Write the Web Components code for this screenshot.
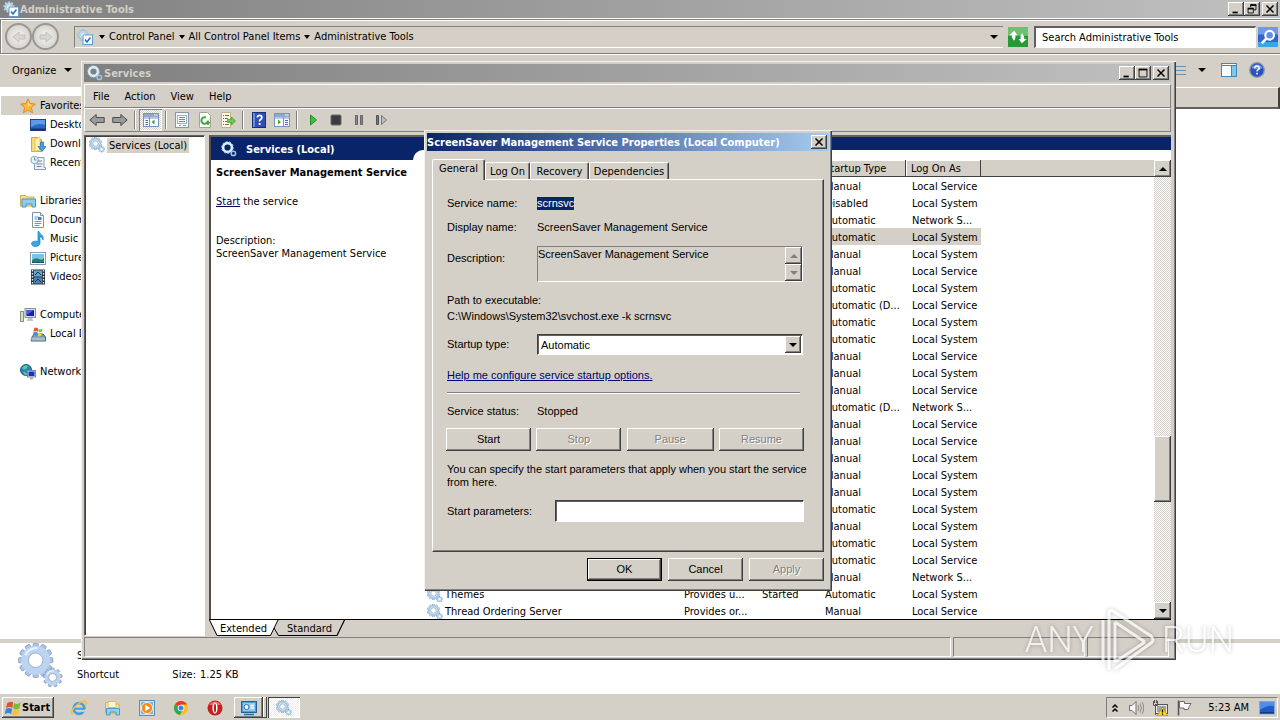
<!DOCTYPE html>
<html lang="en">
<head>
<meta charset="utf-8">
<title>Desktop</title>
<style>
:root{
  --face:#d4d0c8; --shade:#808080; --dark:#404040; --light:#fff; --navy:#0a246a;
  --ui:"DejaVu Sans Condensed","Noto Sans",sans-serif;
  --dlg:"Liberation Sans",Arial,sans-serif;
}
html,body{height:100%}
body{margin:0;background:#fff;color:#000;font:11px/13px var(--ui);display:flex;flex-direction:column;min-height:100vh;overflow:hidden}
main{position:relative;flex:1;display:flex;min-height:0}
explorer-window{flex:1}
services-window{position:absolute;left:81px;right:104px;top:61px}
properties-dialog{position:absolute;left:424px;top:130px}
any-mark{position:absolute;right:46px;top:608px}
</style>
</head>
<body>
<main>
  <explorer-window></explorer-window>
  <services-window></services-window>
  <properties-dialog></properties-dialog>
  <any-mark></any-mark>
</main>
<task-bar></task-bar>

<script>
const BASE = `
*,:host{box-sizing:border-box}
:host{display:block}
button,input,select,textarea{font:inherit;color:inherit;margin:0;padding:0;border:0;border-radius:0;background:none;outline:0}
a{color:inherit;text-decoration:none}
.raised{background:var(--face);box-shadow:inset -1px -1px var(--dark),inset 1px 1px var(--light),inset -2px -2px var(--shade)}
`;
function define(name, css, html, setup){
  const t = document.createElement('template');
  t.innerHTML = `<style>${BASE}${css}</style>${html}`;
  customElements.define(name, class extends HTMLElement{
    constructor(){ super(); this.attachShadow({mode:'open'}); }
    connectedCallback(){
      if(this.shadowRoot.childNodes.length) return;
      this.shadowRoot.append(t.content.cloneNode(true));
      if(setup) setup(this, this.shadowRoot);
    }
  });
}

/* ---------- icons ---------- */
const gear = (cx,cy,r,fill,stroke,n=8,hole='#fff') => {
  let teeth='';
  for(let i=0;i<n;i++) teeth += `<rect x="${cx-r*.17}" y="${cy-r}" width="${r*.34}" height="${r*.5}" fill="${fill}" stroke="${stroke}" stroke-width="${r*.07}" transform="rotate(${i*360/n} ${cx} ${cy})"/>`;
  return teeth + `<circle cx="${cx}" cy="${cy}" r="${r*.74}" fill="${fill}" stroke="${stroke}" stroke-width="${r*.09}"/><circle cx="${cx}" cy="${cy}" r="${r*.42}" fill="${hole}" stroke="${stroke}" stroke-width="${r*.09}"/>`;
};
const softGear = (cx,cy,r,n) => {
  let teeth='';
  for(let i=0;i<n;i++) teeth += `<rect x="${cx-r*.15}" y="${cy-r}" width="${r*.3}" height="${r*.4}" rx="${r*.06}" fill="#a9c4e6" stroke="#8399b8" stroke-width=".25" transform="rotate(${i*360/n} ${cx} ${cy})"/>`;
  return teeth + `<circle cx="${cx}" cy="${cy}" r="${r*.62}" fill="#fff" stroke="#bcd4f1" stroke-width="${r*.44}"/><circle cx="${cx}" cy="${cy}" r="${r*.42}" fill="#fff" stroke="#8fa6c6" stroke-width=".3"/><path d="M${cx-r*.6} ${cy-r*.3}a${r*.7} ${r*.7} 0 0 1 ${r*.7} ${-r*.4}" fill="none" stroke="#eaf4ff" stroke-width="${r*.14}"/>`;
};
const ICONS = {
  gears: gear(6.5,6.5,6.3,'#cfe3f2','#6f9cbd',10)+gear(12.6,12.4,3.3,'#cfe3f2','#6f9cbd',8),
  gearlens: `<circle cx="6.5" cy="6.5" r="4.4" fill="none" stroke="#d8ecfa" stroke-width="2.6"/><circle cx="6.5" cy="6.5" r="5.9" fill="none" stroke="#9cc4e4" stroke-width="1" stroke-dasharray="2 1.6"/><circle cx="12.4" cy="12.4" r="2.2" fill="none" stroke="#9cc4e4" stroke-width="1.5"/>`,
  tools: gear(6,6,5.6,'#cfe3f2','#7aa5c4',9)+`<rect x="6" y="6" width="9.5" height="9.5" fill="#fff" stroke="#5f9ccc"/><path d="M8 10.5l2 2.4 3.4-4.4" fill="none" stroke="#2d6fb5" stroke-width="1.6"/>`,
  biggears: softGear(6.5,6,6,12)+softGear(12.4,12,3.3,9),
  star:`<path d="M8 .8l2.1 4.8 5.2.5-3.9 3.5 1.2 5.2L8 12.1l-4.6 2.7 1.2-5.2L.7 6.1l5.2-.5z" fill="#fbb83a" stroke="#e08a1c"/><path d="M8 3l1.2 3.6 3 .4L8 8z" fill="#ffe49a"/>`,
  desktop:`<rect x=".5" y="2.5" width="15" height="11" fill="#2d67c4" stroke="#1c4587"/><path d="M1 3h14v5Q8 5 1 10z" fill="#5b9be8"/><rect x="1" y="11.5" width="14" height="2" fill="#17325f"/>`,
  download:`<path d="M1.500 1.500h6l1 2h3v12h-10z" fill="#f5dc7c" stroke="#cfa94a"/><path d="M5 3l5-2v13l-5 1.500z" fill="#fff0ae" stroke="#d9b85a" stroke-width=".7"/><path d="M10.500 6h3v4.500H16L12 15.500 8 10.500h2.500z" fill="#3fa0e6" stroke="#1c6fb5" stroke-width=".7"/>`,
  recent:`<path d="M5 2.500h9v10h1.500v2h-11V4" fill="#eef3f7" stroke="#8c9dad"/><circle cx="4.500" cy="5" r="3.700" fill="#e9f3fb" stroke="#8aa5bb"/><path d="M4.500 2.500V5H6.500M8 6h4M6.500 9h6M6.500 11.500h5" stroke="#7189a0" fill="none"/>`,
  libs:`<path d="M.5 2.500h5l1 1.500H14v9H.5z" fill="#f6e08c" stroke="#cfae4e"/><path d="M2 6h13.500v8h-3.500v-3H6v3H2z" fill="#8fcdf0" stroke="#4a94c4"/>`,
  doc:`<path d="M2.500.5h8l3 3v12h-11z" fill="#fff" stroke="#8594a5"/><path d="M10.500.5v3h3" fill="#dce5ee" stroke="#8594a5"/><path d="M4.500 5h4M4.500 7h3M4.500 9.500h7M4.500 11.500h7M4.500 13.500h5" stroke="#5f9bd1"/><rect x="8" y="5" width="3.500" height="3" fill="#3f7fc4"/>`,
  music:`<path d="M9 .5c.5 3 5.500 3.500 4 8.500-.5-2.500-2-3-3-3.500V12c0 2-2 3.500-4.500 3.500S1.500 14 1.500 12.500 4 9.500 8 10.500V.5z" fill="#38a6e8" stroke="#1c78b8" stroke-width=".7"/>`,
  picture:`<rect x=".5" y="2.500" width="15" height="12" fill="#fff" stroke="#8a9bab"/><rect x="2" y="4" width="12" height="9" fill="#7cc3ec"/><path d="M2 10q4-3 7-1t5-1v5H2z" fill="#23806a"/><rect x="2" y="12" width="12" height="1" fill="#12577d"/>`,
  video:`<rect x="1" y=".5" width="14" height="15" fill="#30343a"/><path d="M2.500 1v14M13.500 1v14" stroke="#e8eef4" stroke-width="1.300" stroke-dasharray="1.500 1.500"/><rect x="4" y="1.500" width="8" height="6" fill="#5ea5d8"/><rect x="4" y="8.500" width="8" height="6" fill="#4585ba"/><path d="M5 6l3-3 3 3M5 13l3-3 3 3" stroke="#23313f" fill="none"/>`,
  computer:`<rect x="5" y="1.500" width="10.500" height="9" fill="#d9dee6" stroke="#8c94a3"/><rect x="6.500" y="3" width="7.500" height="6" fill="#1a23b0"/><path d="M6.500 3h7.500l-7.500 5z" fill="#4a63e2"/><path d="M8 11h4l1.500 3h-7z" fill="#c2c7d0"/><rect x=".5" y="4.500" width="3" height="10" fill="#cfe5b8" stroke="#839a73"/>`,
  disk:`<path d="M2 11l2-3h9l2.500 3v4H1z" fill="#7d98a8" stroke="#4a6271"/><rect x="1.500" y="11.500" width="13.500" height="3" fill="#9fc0cf"/><path d="M4 2.500q2-2 4 0v3.200q-2-1.500-4.500.3z" fill="#e8582c"/><path d="M8.500 2.800q2 1.500 4-.3l-.5 3q-2 1.500-3.500.2z" fill="#7cc144"/><path d="M3.500 6.500q2-1.500 4.200 0l-.5 3q-2-1.200-4.200 0z" fill="#3c8fe0"/><path d="M8.200 6.800q2 1.200 3.500 0l-.4 3q-2 1.200-3.500 0z" fill="#fbc93a"/>`,
  network:`<circle cx="6" cy="6" r="5.500" fill="#2a86b8" stroke="#1b5a87"/><path d="M2 4q3-4 6-2L6 5 4 5.500zM3 8l3 .5L7 11l-2 .5z" fill="#5ccf86"/><rect x="7.500" y="6.500" width="8" height="6.500" fill="#dfe6ef" stroke="#7b89a0"/><rect x="8.500" y="7.500" width="6" height="4.500" fill="#1c2fc4"/><path d="M10 13.500h3v2h-3z" fill="#aab"/>`,
  back:`<path d="M.8 8l6.400-5.500v3h8v5h-8v3z" fill="#9a9a9a" stroke="#4e4e4e"/>`,
  fwd:`<path d="M15.200 8L8.800 2.500v3h-8v5h8v3z" fill="#9a9a9a" stroke="#4e4e4e"/>`,
  console:`<rect x=".5" y="1.500" width="15" height="13" fill="#fff" stroke="#7b93b8"/><rect x="1" y="2" width="14" height="3" fill="#8fa9d2"/><path d="M11 3h1.500M13 3h1.500" stroke="#fff"/><path d="M6.500 5v9.500M1 6h14" stroke="#7b93b8"/><path d="M2.500 8.500h2.500M2.500 10.500h2.500M2.500 12.500h2.500" stroke="#4a6fa8"/><path d="M11.500 7.500v5L8.500 10z" fill="#49a62c"/>`,
  panel:`<rect x=".5" y="1.500" width="15" height="13" fill="#fff" stroke="#7b93b8"/><rect x="1" y="2" width="14" height="3" fill="#8fa9d2"/><path d="M11 3h1.500M13 3h1.500" stroke="#fff"/><path d="M9.500 5v9.500M1 6h14" stroke="#7b93b8"/><path d="M11 8.500h3M11 10.500h3M11 12.500h3" stroke="#4a6fa8"/><path d="M4 7.500v5L7 10z" fill="#49a62c"/>`,
  props:`<path d="M.5 2.500h15" stroke="#a7b3c4"/><rect x="1.500" y=".5" width="13" height="15" fill="#f6f8fb" stroke="#8797b0"/><rect x="3.500" y="3.500" width="9" height="8" fill="#fff" stroke="#9fb0c9"/><path d="M5 5.500h6M5 7.500h6M5 9.500h6" stroke="#6f87ad"/><path d="M5 13.500h2M9 13.500h3" stroke="#8797b0"/>`,
  refresh:`<path d="M2.500.5h8l3 3v12h-11z" fill="#fff" stroke="#a5a58c"/><path d="M11 8.500a3.300 3.300 0 1 1-2-3" fill="none" stroke="#3da53a" stroke-width="2"/><path d="M8.500 10h5l-2.500 3.500z" fill="#3da53a"/>`,
  exportl:`<path d="M1.500.5h9v15h-9z" fill="#fffbe6" stroke="#bdb286"/><path d="M3 3.500h1M5 3.500h4M3 6.500h1M5 6.500h3M3 9.500h1M5 9.500h2M3 12.500h1M5 12.500h4" stroke="#766f4c"/><path d="M7.500 7.500h4v-2.500l4 4-4 4v-2.500h-4z" fill="#6dcb4a" stroke="#3a9a22" stroke-width=".7"/>`,
  help:`<rect x="1.500" y=".5" width="13" height="15" fill="#2f4fb5" stroke="#1b2f7c"/><rect x="2" y="1" width="2" height="14" fill="#6d8be0"/><path d="M6.300 5.500q.2-2.200 2.300-2.200t2.300 2q0 1.400-1.300 2.200t-1 2" fill="none" stroke="#fff" stroke-width="1.700"/><rect x="7.700" y="11" width="1.900" height="1.900" fill="#fff"/>`,
  play:`<path d="M5.500 3v10l6-5z" fill="#3fc13a" stroke="#1c8f1c"/>`,
  stop:`<rect x="3" y="3" width="10" height="10" rx="1" fill="#3c3c3c" stroke="#6b6b6b"/>`,
  pause:`<path d="M4.500 3.500h2v9h-2zM9.500 3.500h2v9h-2z" fill="#888" stroke="#666"/>`,
  step:`<path d="M2.500 3.500h2v9h-2z" fill="#777" stroke="#555"/><path d="M7.500 3.500v9l5-4.500z" fill="#bbb" stroke="#777"/>`,
  views:`<path d="M0 4.500h3M5 4.500h11M0 8.500h3M5 8.500h11M0 12.500h3M5 12.500h11" stroke="#6b8fae"/>`,
  preview:`<rect x=".5" y="1.500" width="15" height="13" fill="#fff" stroke="#4585b5"/><path d="M.5 3.500h15" stroke="#4585b5"/><rect x="10.500" y="4" width="4.500" height="10" fill="#7ec8ee"/><path d="M10.500 4v10" stroke="#4585b5"/>`,
  helpc:`<circle cx="8" cy="8" r="7.300" fill="#2a52b8" stroke="#8c97b0" stroke-width="1.300"/><path d="M2.500 6a6 6 0 0 1 11 0q-5 3-11 0z" fill="#6f93e2"/><path d="M5.800 6.200q.1-2.200 2.200-2.200t2.200 1.900q0 1.300-1.200 2t-.9 1.600" fill="none" stroke="#fff" stroke-width="1.500"/><rect x="7.200" y="10.800" width="1.700" height="1.600" fill="#fff"/>`,
  go:`<rect x="0" y="0" width="16" height="16" fill="#259b38"/><path d="M0 0h16v7H0z" fill="#6cc274"/><path d="M1 6.500L5 3l2.500 3.500H5.800Q6.500 9 4.800 11 2.800 9 3 6.500zM15 9.500L11 13 8.500 9.500h1.700Q9.500 7 11.200 5q2 2 1.800 4.500z" fill="#fff"/>`,
  search:`<rect width="16" height="16" fill="#2f63cf"/><path d="M0 0h16v6H0z" fill="#6d9be8"/><path d="M0 12h16v4H0z" fill="#3aa5e8"/><circle cx="9.300" cy="6.600" r="3.500" fill="#5f90e6" stroke="#fff" stroke-width="1.700"/><path d="M6.800 9.200L3 13" stroke="#fff" stroke-width="2"/>`,
  win:`<path d="M2 3.500Q5 .5 8.200 2.600L7.300 8Q4.500 6 1 8.300z" fill="#e8502a"/><path d="M9 3q3 2 6.500-.5l-1 5.700q-3.300 2.300-6.300.2z" fill="#74bd3d"/><path d="M.8 9Q4 6.900 7.100 8.800l-1 5.400Q3.500 12-.1 14.200z" fill="#3a84d8"/><path d="M8 9.300q3 2 6.300-.1l-1 5.300Q10 16.500 7 14.600z" fill="#fbc334"/>`,
  ie:`<circle cx="8" cy="8.500" r="5.300" fill="none" stroke="#3f9fe2" stroke-width="2.700"/><path d="M4 8.700h9.500" stroke="#3f9fe2" stroke-width="2"/><path d="M11 11l4-.5v-1.500" stroke="var(--face)" stroke-width="2" fill="none"/><path d="M1.500 14.500Q-1 11 6 5t9-3.500q1 1-.8 4" fill="none" stroke="#f0bf3a" stroke-width="1.500"/>`,
  folder:`<path d="M.5 2.500h5l1 1.500H14v9H.5z" fill="#f9e596" stroke="#d0ae50"/><path d="M3 1.500h8v6H3z" fill="#fff6cf" stroke="#d9bd68"/><path d="M1.500 8.500h13v6.500h-3.500v-3H5v3H1.500z" fill="#8fd0ee" stroke="#4d9ac6"/>`,
  wmp:`<rect x=".5" y=".5" width="15" height="15" fill="#cfe4f4" stroke="#5b8db5"/><rect x="2" y="2" width="12" height="12" fill="#7fb2d8"/><circle cx="8" cy="8" r="5.600" fill="#f48a1a" stroke="#fff" stroke-width=".8"/><path d="M6.200 4.800v6.400L11.300 8z" fill="#fff"/>`,
  chrome:`<circle cx="8" cy="8" r="7" fill="#fbc116"/><path d="M8 8L1.900 4.500A7 7 0 0 1 14.100 4.500H8z" fill="#e33b2e"/><path d="M8 8L1.900 4.500A7 7 0 0 0 7 14.900L10 9z" fill="#2da94f"/><circle cx="8" cy="8" r="3.300" fill="#fff"/><circle cx="8" cy="8" r="2.500" fill="#3e7ff0"/>`,
  opera:`<circle cx="8" cy="8" r="7.500" fill="#c81e1e"/><path d="M2 5a7 7 0 0 1 12 0z" fill="#e86a62"/><ellipse cx="8" cy="8" rx="2.600" ry="5.500" fill="#fff"/><ellipse cx="8" cy="8" rx="1" ry="4.600" fill="#b01818"/>`,
  cpl:`<rect x=".5" y="1.500" width="15" height="11" fill="#4ea0dc" stroke="#285f96"/><rect x="2" y="3" width="12" height="8" fill="#8fcaf2"/><circle cx="5.500" cy="7" r="2.500" fill="#fff" stroke="#2b6ba5"/><path d="M9.500 5.500h3.500M9.500 8h3.500" stroke="#fff" stroke-width="1.300"/><path d="M3 14.500h10" stroke="#2b6ba5" stroke-width="1.500"/>`,
  chev:`<path d="M5.500 7.500L8 5l2.500 2.500M5.500 11.500L8 9l2.500 2.500" fill="none" stroke="#000" stroke-width="1.500"/>`,
  sound:`<path d="M1.500 5.500h2.500L8 1.500v13l-4-4H1.500z" fill="#f5f5f5" stroke="#707070"/><path d="M10 5q1.800 3 0 6M12 3.500q3 4.500 0 9M14 2q3.500 6 0 12" fill="none" stroke="#8a8a8a"/>`,
  net:`<rect x="3.500" y="4.500" width="12" height="9" fill="#e8e8e8" stroke="#555"/><rect x="5" y="6" width="9" height="6" fill="#9aa3ad"/><path d="M1.500 1v4.500h4V1M3.500 5.500V15M2.500 0v3M4.500 0v3" stroke="#555" fill="none"/><path d="M10.500 7L15.800 15.800H5.200z" fill="#ffd91c" stroke="#a58700" stroke-width=".7"/><path d="M10.500 9.500v3M10.500 13.500v1.300" stroke="#000" stroke-width="1.300"/>`,
  flag:`<path d="M2.500.5v15" stroke="#555" stroke-width="1.500"/><path d="M3.500 1.500h5v2h6.500q-2 3-3 6H8v-1.500H3.500z" fill="#f8f8f8" stroke="#6b6b6b"/>`,
  showdesk:`<rect x=".5" y="1.500" width="15" height="12.500" fill="#1f5cc2" stroke="#86a7d6"/><path d="M1 2h14v4Q8 5 1 10z" fill="#4c8ee8"/><rect x="1" y="12" width="14" height="1.500" fill="#123a7c"/>`,
  min:`<path d="M4 12h6" stroke="#000" stroke-width="2"/>`,
  max:`<path d="M3.500 4v8.500h9V4" fill="none" stroke="#000"/><path d="M3 4h10" stroke="#000" stroke-width="2"/>`,
  restore:`<path d="M6.500 6V3.500h6V9H10" fill="none" stroke="#000"/><path d="M6 3.500h7" stroke="#000" stroke-width="2"/><path d="M3.500 7.500v5h6v-5" fill="none" stroke="#000"/><path d="M3 7.500h7" stroke="#000" stroke-width="2"/>`,
  close:`<path d="M4 4l8 8M12 4l-8 8" stroke="#000" stroke-width="1.700"/>`,
  up:`<path d="M4 10h8L8 6z"/>`,
  down:`<path d="M4 6h8l-4 4z"/>`
};
define('x-icon', `:host{display:block;flex:none;width:16px;height:16px}svg{display:block;width:100%;height:100%}`, ``, (el,root)=>{
  const s = document.createElement('div');
  s.innerHTML = `<svg viewBox="0 0 16 16" aria-hidden="true">${ICONS[el.getAttribute('name')]||''}</svg>`;
  root.append(s.firstChild);
});

/* ---------- window title bar ---------- */
define('title-bar', `
:host{display:flex;align-items:center;height:18px;padding:0 2px 0 3px;gap:1px;color:var(--face);font-weight:bold;background:linear-gradient(90deg,#808080,#c0c0c0)}
:host([active]){color:#fff;background:linear-gradient(90deg,#0a246a,#a6caf0);padding-left:0}
h1{font:inherit;margin:0;flex:1;white-space:nowrap}
.btns{display:flex}
button{width:16px;height:14px;display:grid;place-items:center}
button:not(:first-child):last-child{margin-left:2px}
button x-icon{width:14px;height:14px}
`, `<slot name="icon"></slot><h1><slot></slot></h1><div class="btns"></div>`, (el,root)=>{
  root.querySelector('.btns').innerHTML = el.getAttribute('buttons').split(' ').map(b=>`<button class="raised" aria-label="${b}"><x-icon name="${b}"></x-icon></button>`).join('');
});

/* ---------- scroll bar ---------- */
define('scroll-bar', `
:host{display:flex;flex-direction:column;width:17px;background:repeating-conic-gradient(#fff 0 25%,var(--face) 0 50%) 0 0/2px 2px}
button{height:17px;display:grid;place-items:center;flex:none}
.a{flex:258}.t{height:66px;flex:none}.b{flex:100}
:host([disabled]) .t{display:none}
:host([disabled]) x-icon{fill:#808080}
`, `<button class="raised" aria-label="Scroll up"><x-icon name="up"></x-icon></button><div class="a"></div><div class="t raised"></div><div class="b"></div><button class="raised" aria-label="Scroll down"><x-icon name="down"></x-icon></button>`);

/* ---------- explorer ---------- */
define('nav-item', `
a{display:flex;align-items:center;height:19px;gap:4px;padding-left:19px;white-space:nowrap}
:host([child]) a{padding-left:29px}
:host([selected]) a{background:var(--face)}
:host([lead]){margin-top:19px}
`, `<a href="#"><slot></slot></a>`, (el,root)=>{
  const icon = document.createElement('x-icon');
  icon.setAttribute('name', el.getAttribute('icon'));
  root.querySelector('a').prepend(icon);
});

define('explorer-window', `
:host{display:flex;flex-direction:column;background:#fff}
.address{display:flex;align-items:center;gap:5px;height:35px;padding:0 2px 0 4px;background:var(--face);border:1px solid #808080;border-right:0;box-shadow:inset 1px 1px #fff;margin-top:1px}
.round{width:27px;height:27px;border-radius:50%;border:2px solid #8a8a88;background:radial-gradient(#fff,#c9c6c0);display:grid;place-items:center;opacity:.8}
.round+.round{margin-left:-5px}
.round svg{width:14px;height:14px}
.crumbs{display:flex;align-items:center;flex:1;height:22px;margin-left:10px;padding-left:2px;border:1px solid #808080;border-right:0;border-bottom-color:#fff}
.crumbs i,.caret{width:0;border:solid transparent;border-width:4px 3px 0;border-top-color:#000}
.crumbs i{margin:0 4px}
.crumbs i:first-of-type{margin-left:6px}
.crumbs .last{margin:0 5px 0 auto;border-width:4px 4px 0}
.go{width:20px;height:20px;margin-right:1px}
.go x-icon{width:100%;height:100%}
input{width:222px;height:22px;background:#fff;border:2px solid #606060;border-right:1px solid #fff;border-bottom:1px solid #fff;padding:0 6px}
input::placeholder{color:#000;opacity:1}
.s{margin:0 0 0 -3px}
.tools{display:flex;align-items:center;height:33px;background:var(--face);border-top:1px solid #fff;padding:0 15px 2px 12px}
.tools .org{display:flex;align-items:center;gap:8px}
.caret{border-width:4px 4px 0}
.tools .sp{flex:1}
.tools .caret.v{margin:0 15px 0 12px}
.tools x-icon+x-icon{margin-left:12px}
.body{display:flex;flex:1;align-items:flex-start}
nav{flex:1;padding-top:9px;margin-left:1px}
.head{width:105px;height:22px;background:var(--face);border:solid;border-width:1px 2px 2px 0;border-color:#fff #404040 #606060 #fff}
.details{display:flex;height:54px;border-top:4px solid var(--face);background:#fff;padding-left:17px;gap:14px}
.details>x-icon{width:46px;height:46px}
.first,dl{display:grid;row-gap:6px;padding-top:6px;align-content:start;white-space:nowrap}
.first{width:43px}
dl{margin:0;grid-template-columns:62px 130px 69px auto;column-gap:4px}
dd{margin:0}dt{justify-self:end}
`, `
<title-bar buttons="min restore close"><x-icon slot="icon" name="tools"></x-icon>Administrative Tools</title-bar>
<div class="address">
  <button class="round" aria-label="Back"><svg viewBox="0 0 14 14"><path d="M1 7l6-5v3h6v4H7v3z" fill="#ddd9d2" stroke="#bbb"/></svg></button>
  <button class="round" aria-label="Forward"><svg viewBox="0 0 14 14"><path d="M13 7L7 2v3H1v4h6v3z" fill="#ddd9d2" stroke="#bbb"/></svg></button>
  <div class="crumbs"><x-icon name="tools"></x-icon><i></i><a href="#">Control Panel</a><i></i><a href="#">All Control Panel Items</a><i></i><a href="#">Administrative Tools</a><i class="last"></i></div>
  <button class="go" aria-label="Refresh"><x-icon name="go"></x-icon></button>
  <input type="text" aria-label="Search" placeholder="Search Administrative Tools">
  <button class="go s" aria-label="Search"><x-icon name="search"></x-icon></button>
</div>
<div class="tools"><button class="org">Organize<span class="caret"></span></button><span class="sp"></span><x-icon name="views"></x-icon><span class="caret v"></span><x-icon name="preview"></x-icon><x-icon name="helpc"></x-icon></div>
<div class="body">
  <nav>
    <nav-item icon="star" selected>Favorites</nav-item>
    <nav-item icon="desktop" child>Desktop</nav-item>
    <nav-item icon="download" child>Downloads</nav-item>
    <nav-item icon="recent" child>Recent Places</nav-item>
    <nav-item icon="libs" lead>Libraries</nav-item>
    <nav-item icon="doc" child>Documents</nav-item>
    <nav-item icon="music" child>Music</nav-item>
    <nav-item icon="picture" child>Pictures</nav-item>
    <nav-item icon="video" child>Videos</nav-item>
    <nav-item icon="computer" lead>Computer</nav-item>
    <nav-item icon="disk" child>Local Disk (C:)</nav-item>
    <nav-item icon="network" lead>Network</nav-item>
  </nav>
  <div class="head"></div>
</div>
<div class="details">
  <x-icon name="biggears"></x-icon>
  <div class="first"><span>Services</span><span>Shortcut</span></div>
  <dl><dt>Date modified:</dt><dd>7/14/2009</dd><dt>Date created:</dt><dd>7/14/2009</dd><dt>Size:</dt><dd>1.25 KB</dd></dl>
</div>`);

/* ---------- services console ---------- */
const ROWS = [
 'Manual|Local Service','Disabled|Local System','Automatic|Network S...','Automatic|Local System','Manual|Local System','Manual|Local Service',
 'Automatic|Local System','Automatic (D...|Local Service','Automatic|Local System','Automatic|Local System','Manual|Local Service','Manual|Local System','Manual|Local Service',
 'Automatic (D...|Network S...','Manual|Local Service','Manual|Local Service','Manual|Local System','Manual|Local System','Manual|Local System','Automatic|Local System',
 'Manual|Local System','Automatic|Local System','Automatic|Local Service','Manual|Network S...',
 'Automatic|Local System|Themes|Provides u...|Started','Manual|Local Service|Thread Ordering Server|Provides or...|'
].map(r=>r.split('|'));

define('service-table', `
:host{display:flex;flex:1;min-width:0;align-items:stretch}
.wrap{flex:1;min-width:0;background:linear-gradient(var(--face),var(--face)) 0 0/100% 16px no-repeat,linear-gradient(#404040,#404040) 0 16px/100% 1px no-repeat}
table{border-collapse:separate;border-spacing:0;table-layout:fixed;width:557px}
th{height:17px;padding:1px 5px 0;text-align:left;font-weight:normal;background:var(--face);border-bottom:1px solid #404040;border-right:1px solid #404040;box-shadow:inset 1px 1px #fff}
td{height:17px;padding:2px 0 0 6px;white-space:nowrap;overflow:hidden}
td:first-child{padding:0 0 0 3px}
.n{display:flex;align-items:center;gap:2px;height:17px;padding-top:2px}
tr.sel td{background:var(--face)}
`, `<div class="wrap"><table><colgroup><col style="width:254px"><col style="width:78px"><col style="width:63px"><col style="width:87px"><col style="width:75px"></colgroup>
<thead><tr><th></th><th></th><th></th><th>Startup Type</th><th>Log On As</th></tr></thead><tbody></tbody></table></div><scroll-bar></scroll-bar>`, (el,root)=>{
  root.querySelector('tbody').innerHTML = ROWS.map(([type,as,name='',desc='',st=''],i)=>
   `<tr${i===3?' class="sel"':''}><td><div class="n">${name?`<x-icon name="gears"></x-icon>${name}`:''}</div></td><td>${desc}</td><td>${st}</td><td>${type}</td><td>${as}</td></tr>`).join('');
});

define('view-tabs', `
:host{display:flex;height:17px;background:var(--face);margin-left:-2px;border-top:1px solid #000}
svg{display:block;height:16px;flex:none}
button{height:16px;padding:1px 2px 0;border-bottom:1px solid #000}
.e{background:#fff}
`, `
<svg width="9" viewBox="0 0 9 16"><path d="M1 0h8v16L9 15.500z" fill="#fff"/><path d="M.5 0L8 15.500H9" fill="none" stroke="#000"/></svg>
<button class="e">Extended</button>
<svg width="16" viewBox="0 0 16 16"><path d="M0 0h9L1 16H0z" fill="#fff"/><path d="M0 15.500h1.500L9 0M5 8l4.500 7.500H16" fill="none" stroke="#000"/></svg>
<button>Standard</button>
<svg width="12" viewBox="0 0 12 16"><path d="M0 15.500h3L10.500 0" fill="none" stroke="#000" stroke-width="1.200"/></svg>`);

define('services-window', `
:host{background:var(--face);padding:3px 5px 3px 3px;box-shadow:inset 1px 1px #f4f2ee,inset -1px -1px #404040,inset -2px -2px #808080}
.bar{display:flex;align-items:center;border:1px solid;border-color:#fff #808080 #808080 #fff}
.menu{height:24px;margin-top:2px;padding-left:8px;gap:15px}
.tool{height:24px}
.tool button{width:23px;height:22px;display:grid;place-items:center}
.tool button.on{box-shadow:inset 1px 1px #808080,inset -1px -1px #fff;background:repeating-conic-gradient(#fff 0 25%,var(--face) 0 50%) 0 0/2px 2px}
.tool i{width:2px;height:18px;margin:0 3px;border-left:1px solid #808080;border-right:1px solid #fff}
.panes{display:flex;gap:4px;margin-top:3px}
.tree{width:121px;border:1px solid;border-color:#606060 #fff #fff #606060;box-shadow:inset 1px 1px #404040;background:#fff;padding:1px 1px 1px 4px}
.tree a{display:flex;align-items:center;gap:2px}
.tree span{background:var(--face);padding:1px 2px}
.right{flex:1;min-width:0;border-left:2px solid #505050;border-top:2px solid #606060}
.blue{display:flex;align-items:flex-end;height:23px;background:var(--navy);color:#fff;font-weight:bold}
.blue div{display:flex;align-items:center;align-self:stretch;gap:9px;width:202px;padding:1px 0 0 10px}
.blue span{flex:1;height:10px;background:#fff;border-top-left-radius:10px}
.view{display:flex;background:#fff}
.desc{width:213px;padding:6px 5px;flex:none}
.desc h2{font:bold 11px/13px var(--ui);margin:0 0 16px;white-space:nowrap}
.desc p{margin:0 0 26px;white-space:nowrap}
.desc a{color:#00005c;text-decoration:underline}
.status{display:flex;gap:2px;margin-top:1px;padding-right:2px}
.status div{height:20px;border:1px solid;border-color:#808080 #fff #fff #808080}
.status div:nth-child(1){flex:1}.status div:nth-child(2){width:132px}.status div:nth-child(3){width:82px}
`, `
<title-bar buttons="min max close"><x-icon slot="icon" name="gearlens"></x-icon>Services</title-bar>
<div class="bar menu"><button>File</button><button>Action</button><button>View</button><button>Help</button></div>
<div class="bar tool"></div>
<div class="panes">
  <div class="tree"><a href="#"><x-icon name="gears"></x-icon><span>Services (Local)</span></a></div>
  <div class="right">
    <div class="blue"><div><x-icon name="gearlens"></x-icon>Services (Local)</div><span></span></div>
    <div class="view">
      <section class="desc"><h2>ScreenSaver Management Service</h2><p><a href="#">Start</a> the service</p>Description:<br>ScreenSaver Management Service</section>
      <service-table></service-table>
    </div>
    <view-tabs></view-tabs>
  </div>
</div>
<div class="status"><div></div><div></div><div></div></div>`, (el,root)=>{
  root.querySelector('.tool').innerHTML = 'back fwd | *console | props refresh exportl | help panel | play stop pause step'.split(' ').map(n=>
    n==='|' ? '<i></i>' : `<button aria-label="${n.replace('*','')}"${n[0]==='*'?' class="on"':''}><x-icon name="${n.replace('*','')}"></x-icon></button>`).join('');
});

/* ---------- properties dialog ---------- */
define('push-button', `
button{width:100%;height:23px;display:block;text-align:center;background:var(--face);box-shadow:inset -1px -1px #404040,inset 1px 1px #fff,inset -2px -2px #808080}
:host([default]) button{border:1px solid #000}
:host([disabled]) button{color:#808080;text-shadow:1px 1px #fff}
`, `<button type="button"><slot></slot></button>`, (el,root)=>{ root.querySelector('button').disabled = el.hasAttribute('disabled'); });

define('properties-dialog', `
:host{width:408px;padding:3px;background:var(--face);font:11px/13px var(--dlg);box-shadow:inset 1px 1px #f4f2ee,inset -1px -1px #404040,inset -2px -2px #808080}
title-bar{font-family:var(--ui)}
.tabs{display:flex;align-items:flex-end;margin:9px 5px 0;height:19px;font-family:var(--ui)}
.tabs button{height:17px;padding:1px 0 0;background:var(--face);border:1px solid;border-color:#fff #404040 transparent #fff;border-bottom:0;border-radius:2px 2px 0 0;box-shadow:inset -1px 0 #808080;white-space:nowrap}
.tabs .on{height:21px;margin-bottom:-1px;padding:0 0 3px;position:relative}
.tabs button:nth-child(1){width:53px}.tabs button:nth-child(2){width:45px}.tabs button:nth-child(3){width:59px}.tabs button:nth-child(4){width:80px}
.panel{margin:0 5px;padding:17px 6px 29px 14px;border:1px solid;border-color:#fff #404040 #404040 #fff;box-shadow:inset -1px -1px #808080}
.f{display:grid;grid-template-columns:90px 266px;align-items:center}
.f mark{justify-self:start;background:var(--navy);color:#fff}
.f+.f{margin-top:11px}
.f.d{margin-top:12px;align-items:start}
.d label{padding-top:6px}
.area{display:flex;height:36px;border:1px solid;border-color:#808080 #fff #fff #808080}
textarea{flex:1;min-width:0;resize:none;overflow:hidden;padding:1px 0 0;display:block}
.p{margin:10px 0;line-height:16px}
.f select{height:21px;appearance:none;background:#fff;border:1px solid;border-color:#404040 #fff #fff #404040;box-shadow:inset 1px 1px #606060;padding:1px 0 0 3px}
.sel{display:grid;align-items:center}.sel>*{grid-area:1/1}
.sel span{justify-self:end;width:16px;height:17px;margin-right:2px;display:grid;place-items:center;pointer-events:none}
.link{margin-top:14px}
a{color:#000080;text-decoration:underline}
hr{width:353px;border:0;border-top:1px solid #808080;border-bottom:1px solid #fff;margin:10px 0 11px}
.row{display:grid;grid-template-columns:85px 85px 87px 85px;justify-content:space-between;width:358px;margin:10px 0 12px -1px}
.f.sp{grid-template-columns:108px 249px;margin-top:11px}
.sp input{height:22px;background:#fff;border:1px solid;border-color:#404040 #fff #fff #404040;box-shadow:inset 1px 1px #606060}
.foot{display:flex;justify-content:flex-end;gap:6px;margin:6px 5px 7px}
.foot push-button{width:75px}
`, `
<title-bar active buttons="close">ScreenSaver Management Service Properties (Local Computer)</title-bar>
<div class="tabs"><button class="on">General</button><button>Log On</button><button>Recovery</button><button>Dependencies</button></div>
<form class="panel">
  <div class="f"><span>Service name:</span><mark>scrnsvc</mark></div>
  <div class="f"><span>Display name:</span><span>ScreenSaver Management Service</span></div>
  <div class="f d"><label for="d">Description:</label><div class="area"><textarea id="d" readonly>ScreenSaver Management Service</textarea><scroll-bar disabled></scroll-bar></div></div>
  <div class="p">Path to executable:<br>C:\\Windows\\System32\\svchost.exe -k scrnsvc</div>
  <div class="f"><label for="s">Startup type:</label><div class="sel"><select id="s"><option>Automatic</option></select><span class="raised"><x-icon name="down"></x-icon></span></div></div>
  <div class="link"><a href="#">Help me configure service startup options.</a></div>
  <hr>
  <div class="f"><span>Service status:</span><span>Stopped</span></div>
  <div class="row"><push-button>Start</push-button><push-button disabled>Stop</push-button><push-button disabled>Pause</push-button><push-button disabled>Resume</push-button></div>
  <div>You can specify the start parameters that apply when you start the service from here.</div>
  <div class="f sp"><label for="q">Start parameters:</label><input id="q" type="text"></div>
</form>
<div class="foot"><push-button default>OK</push-button><push-button>Cancel</push-button><push-button disabled>Apply</push-button></div>`);

/* ---------- task bar ---------- */
define('task-bar', `
:host{display:flex;align-items:center;height:27px;background:var(--face);border-top:1px solid #fff;padding:1px 2px 0}
.start{display:flex;align-items:center;gap:1px;width:52px;height:21px;padding-left:3px;font-weight:bold}
.quick{display:flex;gap:18px;margin-left:17px}
.task{display:grid;place-items:center;width:29px;height:21px;margin-left:11px}
.stack{width:4px;height:21px;box-shadow:inset -1px -1px #404040,inset 1px 1px #fff}
.task.on{width:32px;margin-left:1px;box-shadow:inset 1px 1px #404040,inset -1px -1px #fff;background:repeating-conic-gradient(#fff 0 25%,#f0eeea 0 50%) 0 0/2px 2px}
.tray{display:flex;align-items:center;gap:8px;height:21px;margin-left:auto;padding:0 2px 0 0;border:1px solid;border-color:#808080 #fff #fff #808080}
.tray time{margin:0 2px 0 8px}
.tray .c{margin-right:-3px}
`, `
<button class="start raised"><x-icon name="win"></x-icon>Start</button>
<div class="quick"><x-icon name="ie"></x-icon><x-icon name="folder"></x-icon><x-icon name="wmp"></x-icon><x-icon name="chrome"></x-icon><x-icon name="opera"></x-icon></div>
<button class="task raised" aria-label="Control Panel"><x-icon name="cpl"></x-icon></button><span class="stack"></span>
<button class="task on" aria-label="Services"><x-icon name="gears"></x-icon></button>
<div class="tray"><x-icon class="c" name="chev"></x-icon><x-icon name="sound"></x-icon><x-icon name="net"></x-icon><x-icon name="flag"></x-icon><time>5:23 AM</time><x-icon name="showdesk"></x-icon></div>`);

/* ---------- watermark ---------- */
define('any-mark', `
:host{display:flex;align-items:center;gap:6px;color:#fff;opacity:.7;font:300 36px/64px Roboto,"Liberation Sans",sans-serif;filter:drop-shadow(0 0 2px rgba(0,0,0,.35));pointer-events:none}
svg{width:56px;height:64px}
`, `<span>ANY</span><svg viewBox="0 0 56 64"><path d="M3 12v42M9 62V5q0-4 4-2l38 25q4 4 0 7L15 61M15 14L45 34M15 54L45 34M15 14v40" fill="none" stroke="#fff" stroke-width="3"/></svg><span>RUN</span>`);
</script>
</body>
</html>
